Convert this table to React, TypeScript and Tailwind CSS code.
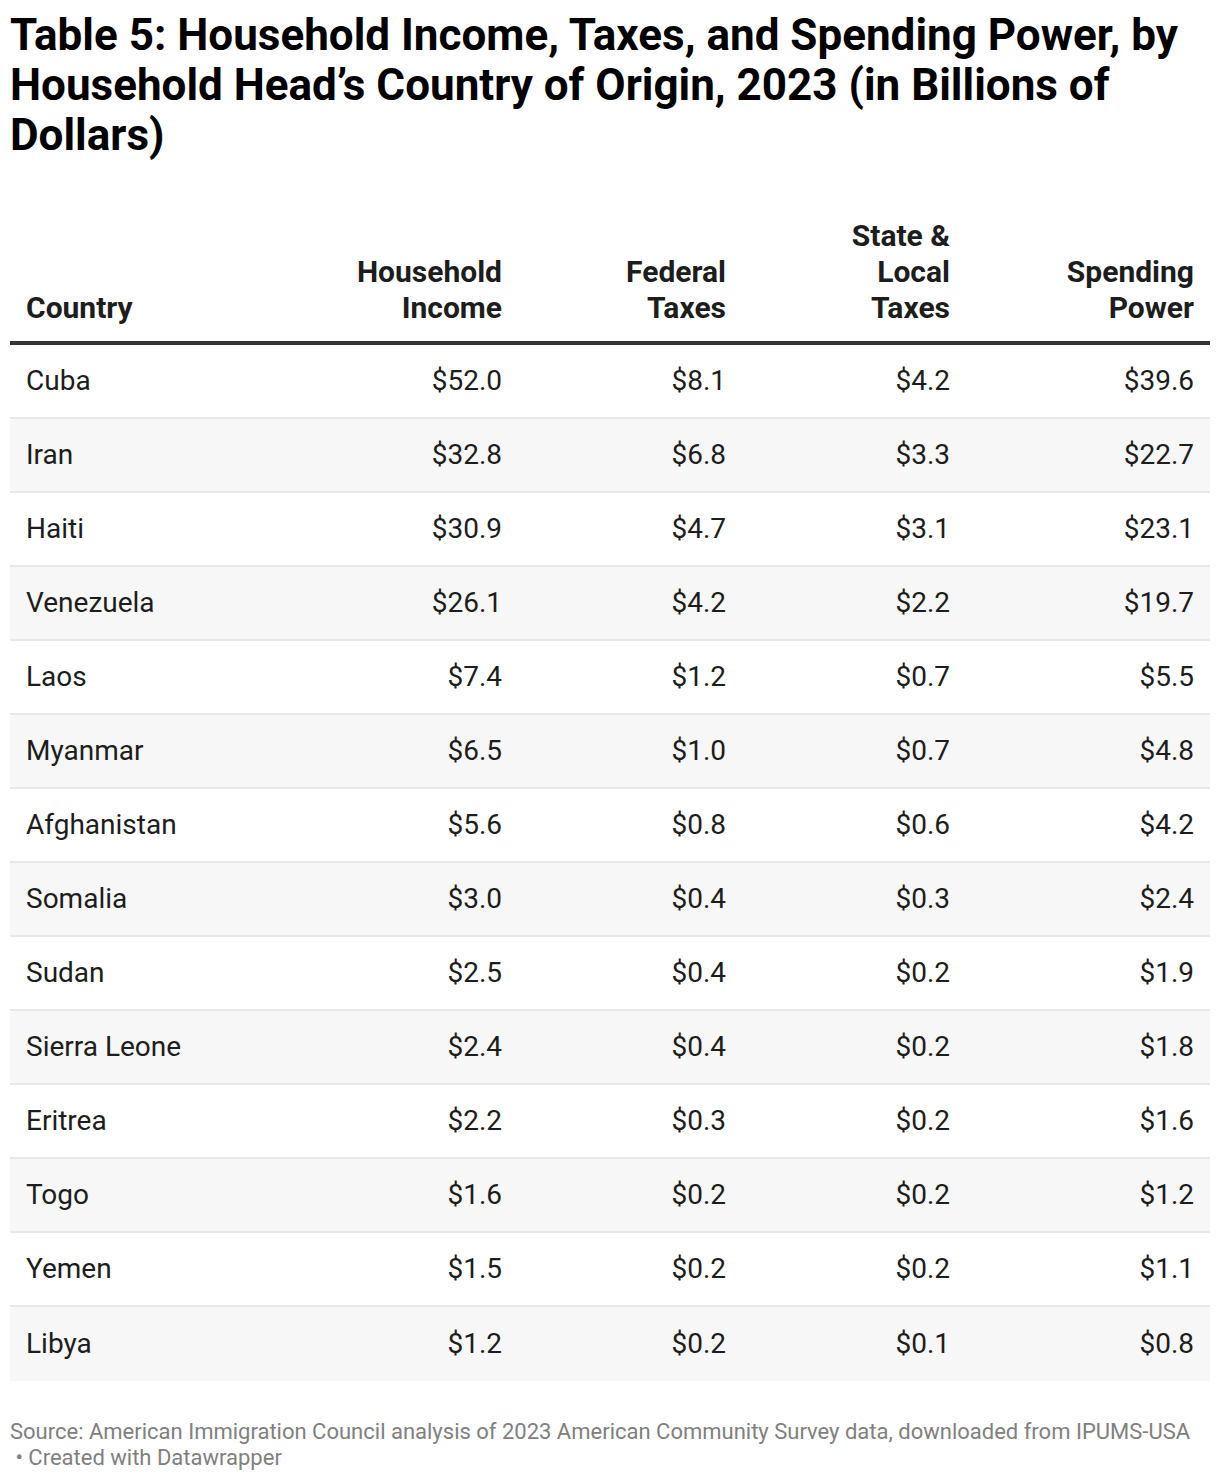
import React from "react";

type Row = { country: string; income: string; federal: string; state: string; spending: string };

const rows: Row[] = [
  { country: "Cuba", income: "$52.0", federal: "$8.1", state: "$4.2", spending: "$39.6" },
  { country: "Iran", income: "$32.8", federal: "$6.8", state: "$3.3", spending: "$22.7" },
  { country: "Haiti", income: "$30.9", federal: "$4.7", state: "$3.1", spending: "$23.1" },
  { country: "Venezuela", income: "$26.1", federal: "$4.2", state: "$2.2", spending: "$19.7" },
  { country: "Laos", income: "$7.4", federal: "$1.2", state: "$0.7", spending: "$5.5" },
  { country: "Myanmar", income: "$6.5", federal: "$1.0", state: "$0.7", spending: "$4.8" },
  { country: "Afghanistan", income: "$5.6", federal: "$0.8", state: "$0.6", spending: "$4.2" },
  { country: "Somalia", income: "$3.0", federal: "$0.4", state: "$0.3", spending: "$2.4" },
  { country: "Sudan", income: "$2.5", federal: "$0.4", state: "$0.2", spending: "$1.9" },
  { country: "Sierra Leone", income: "$2.4", federal: "$0.4", state: "$0.2", spending: "$1.8" },
  { country: "Eritrea", income: "$2.2", federal: "$0.3", state: "$0.2", spending: "$1.6" },
  { country: "Togo", income: "$1.6", federal: "$0.2", state: "$0.2", spending: "$1.2" },
  { country: "Yemen", income: "$1.5", federal: "$0.2", state: "$0.2", spending: "$1.1" },
  { country: "Libya", income: "$1.2", federal: "$0.2", state: "$0.1", spending: "$0.8" },
];

const cols = "grid grid-cols-[284px_224px_224px_224px_244px]";

export default function App() {
  return (
    <div className="w-[1220px] bg-white px-[10px] pt-[10px] text-[#1d1d1d] font-['Roboto',sans-serif]">
      <h1 className="text-[44px] font-bold leading-[50px] text-black">
        Table 5: Household Income, Taxes, and Spending Power, by Household Head’s Country of Origin, 2023 (in Billions
        of Dollars)
      </h1>

      <div className="mt-[58px]">
        {/* header */}
        <div className={`${cols} items-end border-b-4 border-[#333333] pb-[15px] text-[30px] font-bold leading-[36px]`}>
          <div className="pl-4">Country</div>
          <div className="pr-4 text-right">
            Household
            <br />
            Income
          </div>
          <div className="pr-4 text-right">
            Federal
            <br />
            Taxes
          </div>
          <div className="pr-4 text-right">
            State &amp;
            <br />
            Local
            <br />
            Taxes
          </div>
          <div className="pr-4 text-right">
            Spending
            <br />
            Power
          </div>
        </div>

        {rows.map((r, i) => (
          <div
            key={r.country}
            className={
              `${cols} h-[74px] items-center text-[28px] ` +
              (i % 2 === 1 ? "bg-[#f7f7f7] " : "bg-white ") +
              (i < rows.length - 1 ? "border-b-2 border-[#e8e8e8]" : "")
            }
          >
            <div className="pl-4">{r.country}</div>
            <div className="pr-4 text-right">{r.income}</div>
            <div className="pr-4 text-right">{r.federal}</div>
            <div className="pr-4 text-right">{r.state}</div>
            <div className="pr-4 text-right">{r.spending}</div>
          </div>
        ))}
      </div>

      <div className="mt-[38px] pb-[12px] text-[22px] leading-[26px] text-[#808080]">
        Source: American Immigration Council analysis of 2023 American Community Survey data, downloaded from IPUMS-USA
        <br />
        &nbsp;• Created with Datawrapper
      </div>
    </div>
  );
}
